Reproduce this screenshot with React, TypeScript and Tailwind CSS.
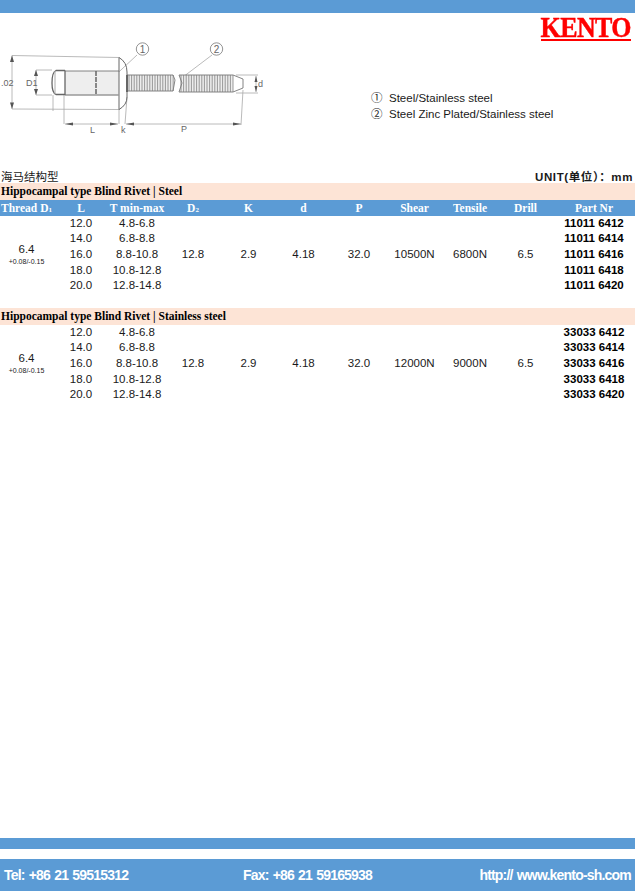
const COLS = "grid grid-cols-[53px_56px_56px_56px_55px_55px_56px_55px_56px_55px_82px]";
const ROW_HEIGHTS = "grid-rows-[15px_16px_16px_15px_16px]";
const HEADERS = ["L", "T min-max", "D", "K", "d", "P", "Shear", "Tensile", "Drill", "Part Nr"];
const LENGTHS = [
  ["12.0", "4.8-6.8"],
  ["14.0", "6.8-8.8"],
  ["16.0", "8.8-10.8"],
  ["18.0", "10.8-12.8"],
  ["20.0", "12.8-14.8"],
];

function RivetDiagram() {
  const leftThreads = Array.from({ length: 18 }, (_, i) => 129 + i * 2.6);
  const rightThreads = Array.from({ length: 21 }, (_, i) => 181 + i * 2.6);
  return (
    <svg width="300" height="130" viewBox="0 13 300 130" className="block">
      <defs>
        <filter id="soft" x="-5%" y="-5%" width="110%" height="110%">
          <feGaussianBlur stdDeviation="0.3" />
        </filter>
      </defs>
      <g filter="url(#soft)">
        <g fill="none" stroke="#a8a8a8" strokeWidth="0.8">
          <path d="M12 55.500 L119 57.500 M12 109 L119 109.500 M36 70 L52 70 M36 95 L52 95" />
          <path d="M12 55.500 V109 M36 70 V95 M53 95 V111 M64 95 V124 M119 109 V124 M127 97 L125 124 M243 90 L241 125" />
          <path d="M65 124 H118 M126 124 H241 M256 76 V92 M236 75 H258 M236 93 H258" />
          <path d="M107 83 L137 55 M183 77 L212 55" />
          <circle cx="142.500" cy="49" r="6.200" stroke="#777" />
          <circle cx="216.500" cy="49" r="6.200" stroke="#777" />
        </g>
        <g fill="#555">
          <path d="M12 55.500 L10 62 H14 Z M12 109 L10 102.500 H14 Z M36 70 L34 76 H38 Z M36 95 L34 89 H38 Z" />
          <path d="M65 124 L73 122.500 V125.500 Z M118 124 L110 122.500 V125.500 Z M126 124 L134 122.500 V125.500 Z M241 124 L233 122.500 V125.500 Z" />
          <path d="M256 76 L254.500 82 H257.500 Z M256 92 L254.500 86 H257.500 Z" />
        </g>
        <path d="M65 71 H119 V95 H65 Z" fill="#eeeeee" />
        <path d="M128 75 H173 V91 H128 Z M180 75 H233 V92 H180 Z" fill="#ededed" />
        <g fill="none" stroke="#666" strokeWidth="1">
          <path d="M119 57.500 Q127 62 127 72 V97 Q127 105 119 109.500 V57.500" />
          <path d="M65 71 H119" strokeWidth="0.8" />
          <path d="M65 95 H119" strokeWidth="1.400" stroke="#999" />
          <path d="M65 70.500 H56 Q52 72 52 83 Q52 93 56 94.500 H65 M65 70.500 V95" strokeWidth="1.300" />
          <path d="M55 71 V94" stroke="#aaa" />
          <path d="M96 71 V95" strokeWidth="1.500" strokeDasharray="5 1" />
          <path d="M127 75 V92" strokeWidth="2" />
          <path d="M127 75 H173 L175 80 L173 91 H127 M179 75 H233 L243 79 V88 L233 92 H179 L182 83 Z" strokeWidth="0.8" />
        </g>
        <g stroke="#808080" strokeWidth="0.8">
          {leftThreads.map((x) => (
            <path key={x} d={`M${x} 75 V91`} />
          ))}
          {rightThreads.map((x) => (
            <path key={x} d={`M${x} 75 V92`} />
          ))}
        </g>
      </g>
      <g fill="#666" fontSize="9" fontFamily="'Liberation Sans', sans-serif">
        <text x="1" y="85.500">.02</text>
        <text x="26" y="86">D1</text>
        <text x="90" y="133">L</text>
        <text x="121" y="133">k</text>
        <text x="181" y="132">P</text>
        <text x="258" y="87">d</text>
        <text x="139.800" y="53" fontSize="10">1</text>
        <text x="213.800" y="53" fontSize="10">2</text>
      </g>
    </svg>
  );
}

function SpecTable({ prefix, shear, tensile }: { prefix: string; shear: string; tensile: string }) {
  return (
    <div className={`${COLS} ${ROW_HEIGHTS} items-center text-center text-[11.500px] text-[#1a1a1a]`}>
      <div className="row-span-5 flex flex-col items-center pb-[2px]">
        <span className="leading-[15px]">6.4</span>
        <span className="text-[7px] leading-[9px] whitespace-nowrap">+0.08/-0.15</span>
      </div>
      {LENGTHS.map(([length, range], i) => (
        <div key={length} className="col-start-2 col-span-2 grid grid-cols-2" style={{ gridRowStart: i + 1 }}>
          <span>{length}</span>
          <span>{range}</span>
        </div>
      ))}
      <div className="col-start-4 row-start-1 row-span-5">12.8</div>
      <div className="col-start-5 row-start-1 row-span-5">2.9</div>
      <div className="col-start-6 row-start-1 row-span-5">4.18</div>
      <div className="col-start-7 row-start-1 row-span-5">32.0</div>
      <div className="col-start-8 row-start-1 row-span-5">{shear}</div>
      <div className="col-start-9 row-start-1 row-span-5">{tensile}</div>
      <div className="col-start-10 row-start-1 row-span-5">6.5</div>
      {["12", "14", "16", "18", "20"].map((suffix, i) => (
        <div key={suffix} className="col-start-11 font-bold text-black" style={{ gridRowStart: i + 1 }}>
          {prefix} 64{suffix}
        </div>
      ))}
    </div>
  );
}

export default function App() {
  return (
    <div className="flex h-[892px] flex-col bg-white font-['Liberation_Sans','Noto_Sans_CJK_SC',sans-serif]">
      <div className="h-[13px] bg-[#5b9bd5]" />

      <div className="flex h-[157px]">
        <RivetDiagram />
        <div className="flex flex-1 flex-col pr-[4px]">
          <div className="mt-[3px] self-end border-b-[2px] border-[#ff0000] font-['Liberation_Serif',serif] text-[26px] leading-[23px] font-bold tracking-[-0.6px] text-[#ff0000] [-webkit-text-stroke:0.4px_#ff0000]">
            <span className="block scale-y-[1.15]">KENTO</span>
          </div>
          <div className="mt-[50px] ml-[71px] flex flex-col gap-[2px] text-[11.500px] leading-[14px] text-[#1a1a1a]">
            <div className="flex gap-[7px]">
              <span className="w-[11px]">①</span>
              <span>Steel/Stainless steel</span>
            </div>
            <div className="flex gap-[7px]">
              <span className="w-[11px]">②</span>
              <span>Steel Zinc Plated/Stainless steel</span>
            </div>
          </div>
        </div>
      </div>

      <div className="flex h-[13px] items-center justify-between pt-[3px] pr-[2px] pl-[1px] text-[11.500px] text-[#1a1a1a]">
        <span>海马结构型</span>
        <span className="font-bold tracking-[0.6px]">UNIT(单位）：mm</span>
      </div>

      <div className="flex h-[17px] items-center bg-[#fde4d6] pl-[1px] font-['Liberation_Serif',serif] text-[11.500px] font-bold text-black">
        Hippocampal type Blind Rivet | Steel
      </div>
      <div className={`${COLS} h-[16px] items-center bg-[#5b9bd5] text-center font-['Liberation_Serif',serif] text-[11.500px] font-bold text-white`}>
        <span className="whitespace-nowrap">
          Thread D<span className="text-[7px]">1</span>
        </span>
        {HEADERS.map((label) => (
          <span key={label} className="whitespace-nowrap">
            {label}
            {label === "D" && <span className="text-[7px]">2</span>}
          </span>
        ))}
      </div>
      <SpecTable prefix="11011" shear="10500N" tensile="6800N" />

      <div className="mt-[14px] flex h-[17px] items-center bg-[#fde4d6] pl-[1px] font-['Liberation_Serif',serif] text-[11.500px] font-bold text-black">
        Hippocampal type Blind Rivet | Stainless steel
      </div>
      <SpecTable prefix="33033" shear="12000N" tensile="9000N" />

      <div className="mt-auto h-[11px] bg-[#5b9bd5]" />
      <div className="mt-[10px] mb-[1px] flex h-[32px] items-center bg-[#5b9bd5] pr-[4px] pl-[4px] text-[14px] font-bold tracking-[-0.8px] text-white [word-spacing:1px]">
        <span className="w-[239px]">Tel: +86 21 59515312</span>
        <span>Fax: +86 21 59165938</span>
        <span className="ml-auto">http:// www.kento-sh.com</span>
      </div>
    </div>
  );
}
